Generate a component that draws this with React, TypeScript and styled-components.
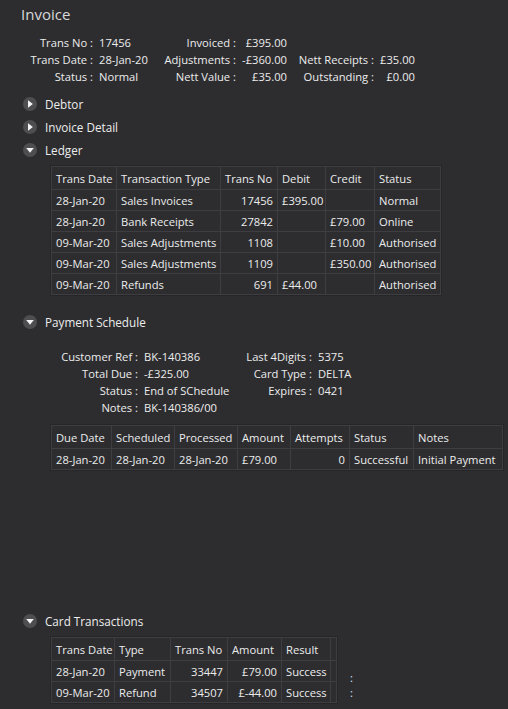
import React from 'react'
import styled, { createGlobalStyle } from 'styled-components'

const GlobalStyle = createGlobalStyle`
  html, body {
    margin: 0;
    padding: 0;
    background: #2d2d30;
  }
  body {
    font-family: "Open Sans", "Noto Sans", sans-serif;
    font-size: 11.2px;
    color: #ececec;
  }
`

const Page = styled.div`
  width: 508px;
  height: 709px;
  overflow: hidden;
  background: #2d2d30;
  padding: 4px 0 0 0;
  box-sizing: border-box;
`

const Title = styled.h1`
  margin: 0 0 0 21px;
  height: 20px;
  line-height: 20px;
  font-size: 15px;
  font-weight: 400;
  color: #d8d8d8;
`

const InfoGrid = styled.div<{ $cols: string; $left: number; $top: number }>`
  display: grid;
  grid-template-columns: ${p => p.$cols};
  column-gap: 6px;
  grid-auto-rows: 17px;
  align-items: center;
  margin: ${p => p.$top}px 0 0 ${p => p.$left}px;
  white-space: nowrap;
`

const Label = styled.span`
  text-align: right;
`

const Value = styled.span<{ $right?: boolean }>`
  text-align: ${p => (p.$right ? 'right' : 'left')};
`

const Sections = styled.div<{ $top: number }>`
  margin-top: ${p => p.$top}px;
`

const SectionHead = styled.div`
  display: flex;
  align-items: center;
  gap: 8px;
  height: 23px;
  padding-left: 23px;
  font-size: 11.7px;
`

const Body = styled.div<{ $top: number }>`
  padding-left: 51px;
  margin-top: ${p => p.$top}px;
`

const Grid = styled.table<{ $w: number }>`
  border-collapse: collapse;
  table-layout: fixed;
  width: ${p => p.$w}px;
  outline: 1px solid #262628;
  white-space: nowrap;
`

const Th = styled.th<{ $w: number }>`
  height: 22px;
  padding: 0 4px;
  font-weight: 400;
  text-align: left;
  border: 1px solid #3e3e42;
  width: ${p => p.$w - 9}px;
`

const Td = styled.td<{ $right?: boolean }>`
  height: 20px;
  padding: 0 4px;
  text-align: ${p => (p.$right ? 'right' : 'left')};
  border: 1px solid #3e3e42;
`

const Gap = styled.div<{ $h: number }>`
  height: ${p => p.$h}px;
`

const CardWrap = styled.div`
  display: flex;
  align-items: flex-start;
`

const Stray = styled.div`
  display: flex;
  flex-direction: column;
  gap: 3px;
  margin: 35px 0 0 13px;
  color: #cfe3ff;
  line-height: 12px;
`

function Toggle({ open }: { open: boolean }) {
  return (
    <svg width="14" height="14" viewBox="0 0 14 14">
      <circle cx="7" cy="7" r="7" fill="#4e4e50" />
      {open ? (
        <path d="M3.2 4.9 H10.8 L7 9.8 Z" fill="#f4f4f4" />
      ) : (
        <path d="M5 3.2 V10.8 L9.9 7 Z" fill="#f4f4f4" />
      )}
    </svg>
  )
}

const Section = ({ title, open }: { title: string; open: boolean }) => (
  <SectionHead>
    <Toggle open={open} />
    <span>{title}</span>
  </SectionHead>
)

const ledgerCols: [string, number][] = [
  ['Trans Date', 65],
  ['Transaction Type', 104],
  ['Trans No', 57],
  ['Debit', 48],
  ['Credit', 49],
  ['Status', 66],
]

const ledger = [
  ['28-Jan-20', 'Sales Invoices', '17456', '£395.00', '', 'Normal'],
  ['28-Jan-20', 'Bank Receipts', '27842', '', '£79.00', 'Online'],
  ['09-Mar-20', 'Sales Adjustments', '1108', '', '£10.00', 'Authorised'],
  ['09-Mar-20', 'Sales Adjustments', '1109', '', '£350.00', 'Authorised'],
  ['09-Mar-20', 'Refunds', '691', '£44.00', '', 'Authorised'],
]

const scheduleCols: [string, number][] = [
  ['Due Date', 60],
  ['Scheduled', 63],
  ['Processed', 63],
  ['Amount', 53],
  ['Attempts', 59],
  ['Status', 64],
  ['Notes', 89],
]

const cardCols: [string, number][] = [
  ['Trans Date', 63],
  ['Type', 56],
  ['Trans No', 57],
  ['Amount', 54],
  ['Result', 49],
  ['', 7],
]

const cards = [
  ['28-Jan-20', 'Payment', '33447', '£79.00', 'Success'],
  ['09-Mar-20', 'Refund', '34507', '£-44.00', 'Success'],
]

const total = (cols: [string, number][]) => cols.reduce((s, c) => s + c[1], 0)

const Head = ({ cols }: { cols: [string, number][] }) => (
  <thead>
    <tr>
      {cols.map(([name, w], i) => (
        <Th key={i} $w={w}>
          {name}
        </Th>
      ))}
    </tr>
  </thead>
)

export default function App() {
  return (
    <Page>
      <GlobalStyle />
      <Title>Invoice</Title>

      <InfoGrid $cols="72px 58px 73px 45px 81px 35px" $left={21} $top={10}>
        <Label>Trans No :</Label>
        <Value>17456</Value>
        <Label>Invoiced :</Label>
        <Value $right>£395.00</Value>
        <span />
        <span />
        <Label>Trans Date :</Label>
        <Value>28-Jan-20</Value>
        <Label>Adjustments :</Label>
        <Value $right>-£360.00</Value>
        <Label>Nett Receipts :</Label>
        <Value $right>£35.00</Value>
        <Label>Status :</Label>
        <Value>Normal</Value>
        <Label>Nett Value :</Label>
        <Value $right>£35.00</Value>
        <Label>Outstanding :</Label>
        <Value $right>£0.00</Value>
      </InfoGrid>

      <Sections $top={7}>
        <Section title="Debtor" open={false} />
        <Section title="Invoice Detail" open={false} />
        <Section title="Ledger" open />
        <Body $top={5}>
          <Grid $w={total(ledgerCols)}>
            <Head cols={ledgerCols} />
            <tbody>
              {ledger.map((r, i) => (
                <tr key={i}>
                  <Td>{r[0]}</Td>
                  <Td>{r[1]}</Td>
                  <Td $right>{r[2]}</Td>
                  <Td>{r[3]}</Td>
                  <Td>{r[4]}</Td>
                  <Td>{r[5]}</Td>
                </tr>
              ))}
            </tbody>
          </Grid>
        </Body>

        <Gap $h={15} />
        <Section title="Payment Schedule" open />
        <InfoGrid $cols="87px 90px 72px 60px" $left={51} $top={15}>
          <Label>Customer Ref :</Label>
          <Value>BK-140386</Value>
          <Label>Last 4Digits :</Label>
          <Value>5375</Value>
          <Label>Total Due :</Label>
          <Value>-£325.00</Value>
          <Label>Card Type :</Label>
          <Value>DELTA</Value>
          <Label>Status :</Label>
          <Value>End of SChedule</Value>
          <Label>Expires :</Label>
          <Value>0421</Value>
          <Label>Notes :</Label>
          <Value>BK-140386/00</Value>
        </InfoGrid>
        <Body $top={9}>
          <Grid $w={total(scheduleCols)}>
            <Head cols={scheduleCols} />
            <tbody>
              <tr>
                <Td>28-Jan-20</Td>
                <Td>28-Jan-20</Td>
                <Td>28-Jan-20</Td>
                <Td>£79.00</Td>
                <Td $right>0</Td>
                <Td>Successful</Td>
                <Td>Initial Payment</Td>
              </tr>
            </tbody>
          </Grid>
        </Body>

        <Gap $h={139} />
        <Section title="Card Transactions" open />
        <Body $top={5}>
          <CardWrap>
            <Grid $w={total(cardCols)}>
              <Head cols={cardCols} />
              <tbody>
                {cards.map((r, i) => (
                  <tr key={i}>
                    <Td>{r[0]}</Td>
                    <Td>{r[1]}</Td>
                    <Td $right>{r[2]}</Td>
                    <Td $right>{r[3]}</Td>
                    <Td>{r[4]}</Td>
                    <Td />
                  </tr>
                ))}
              </tbody>
            </Grid>
            <Stray>
              <span>:</span>
              <span>:</span>
            </Stray>
          </CardWrap>
        </Body>
      </Sections>
    </Page>
  )
}
